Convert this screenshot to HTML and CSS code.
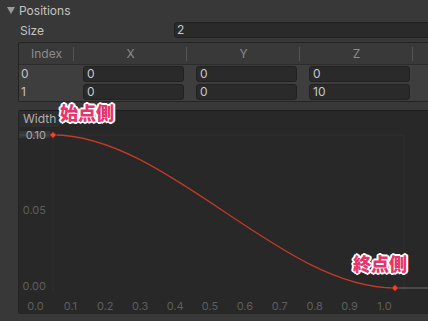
FILE: index.html
```html
<!DOCTYPE html>
<html lang="ja">
<head>
    <meta charset="UTF-8">
    <title>Positions</title>
    <link rel="stylesheet" href="styles.css">
</head>
<body>
    <div class="inspector">
        <div class="foldout"><span class="arrow"></span>Positions</div>

        <div class="field">
            <span class="label">Size</span>
            <span class="input">2</span>
        </div>

        <div class="table">
            <div class="thead">
                <div class="th">Index</div>
                <div class="th">X</div>
                <div class="th">Y</div>
                <div class="th">Z</div>
                <div class="th"></div>
            </div>
            <div class="tr">
                <div class="idx">0</div>
                <div class="cell"><span class="input">0</span></div>
                <div class="cell"><span class="input">0</span></div>
                <div class="cell"><span class="input">0</span></div>
                <div class="cell"></div>
            </div>
            <div class="tr">
                <div class="idx">1</div>
                <div class="cell"><span class="input">0</span></div>
                <div class="cell"><span class="input">0</span></div>
                <div class="cell"><span class="input">10</span></div>
                <div class="cell"></div>
            </div>
        </div>

        <div class="curve">
            <svg class="graph" width="410" height="202" viewBox="19 111 410 202">
                <!-- plot area -->
                <line x1="53" y1="135" x2="404" y2="135" class="grid" />
                <line x1="53" y1="135" x2="53" y2="292" class="grid" />
                <line x1="404" y1="135" x2="404" y2="292" class="grid" />

                <!-- wrap lines -->
                <rect x="19" y="131" width="31" height="7" fill="#373737" />
                <line x1="19" y1="135" x2="50" y2="135" stroke="#4a4a4a" stroke-width="1" />
                <line x1="398" y1="288" x2="430" y2="288" stroke="#555" stroke-width="1.6" />

                <path d="M53 135 C167 135 281 288 395 288" fill="none" stroke="#c23a26" stroke-width="1.3" />
                <path d="M53 131.5 L56.5 135 L53 138.5 L49.5 135 Z" fill="#e24a30" stroke="#5a140c" stroke-width="0.8" />
                <path d="M395 284.5 L398.5 288 L395 291.5 L391.5 288 Z" fill="#e24a30" stroke="#5a140c" stroke-width="0.8" />

                <text x="46" y="139" class="axis hi" text-anchor="end">0.10</text>
                <text x="46" y="214" class="axis" text-anchor="end">0.05</text>
                <text x="46" y="290" class="axis" text-anchor="end">0.00</text>

                <text x="35.5" y="310" class="axis" text-anchor="middle">0.0</text>
                <text x="70.4" y="310" class="axis" text-anchor="middle">0.1</text>
                <text x="105.3" y="310" class="axis" text-anchor="middle">0.2</text>
                <text x="140.2" y="310" class="axis" text-anchor="middle">0.3</text>
                <text x="175.1" y="310" class="axis" text-anchor="middle">0.4</text>
                <text x="210" y="310" class="axis" text-anchor="middle">0.5</text>
                <text x="244.9" y="310" class="axis" text-anchor="middle">0.6</text>
                <text x="279.8" y="310" class="axis" text-anchor="middle">0.7</text>
                <text x="314.7" y="310" class="axis" text-anchor="middle">0.8</text>
                <text x="349.6" y="310" class="axis" text-anchor="middle">0.9</text>
                <text x="384.5" y="310" class="axis" text-anchor="middle">1.0</text>
            </svg>
            <span class="curve-title">Width</span>
            <span class="note note-start">始点側</span>
            <span class="note note-end">終点側</span>
        </div>
    </div>
</body>
</html>
```

FILE: styles.css
```css
body {
    margin: 0;
    background: #383838;
    overflow: hidden;
    font-family: Inter, "Noto Sans", sans-serif;
    font-size: 12px;
    color: #c4c4c4;
}
.inspector {
    width: 440px;
}

.foldout {
    height: 20px;
    display: flex;
    align-items: center;
    padding-left: 7px;
}
.arrow {
    width: 0;
    height: 0;
    border-left: 4px solid transparent;
    border-right: 4px solid transparent;
    border-top: 7px solid #9a9a9a;
    margin-right: 4px;
}

.field {
    display: flex;
    align-items: center;
    height: 18px;
    margin-top: 1px;
    padding-left: 20px;
}
.field .label {
    width: 154px;
}
.input {
    display: block;
    box-sizing: border-box;
    height: 16px;
    line-height: 14px;
    background: #2a2a2a;
    border: 1px solid #212121;
    border-radius: 3px;
    padding-left: 3px;
    color: #c8c8c8;
}
.field .input {
    flex: 1;
    padding-left: 2px;
}

.table {
    margin: 3px 0 0 18px;
    border: 1px solid #242424;
    border-radius: 2px;
}
.thead,
.tr {
    display: grid;
    grid-template-columns: 55px 113px 113px 113px 1fr;
}
.thead {
    height: 21px;
    background: #393939;
    border-bottom: 1px solid #2c2c2c;
}
.th {
    position: relative;
    text-align: center;
    line-height: 21px;
    color: #8c8c8c;
}
.th::after {
    content: "";
    position: absolute;
    right: 0;
    top: 4px;
    width: 1px;
    height: 14px;
    background: #555;
}
.th:last-child::after {
    display: none;
}
.tr {
    height: 18px;
    background: #3e3e3e;
}
.idx {
    padding-left: 2px;
    line-height: 18px;
}
.cell {
    padding: 1px 3px 1px 9px;
}

.curve {
    position: relative;
    margin: 8px 0 0 18px;
    height: 202px;
    background: #282828;
    border-top: 1px solid #1c1c1c;
    border-left: 1px solid #232323;
    border-bottom: 1px solid #262626;
    border-radius: 3px 0 0 3px;
}
.graph {
    display: block;
    overflow: visible;
}
.grid {
    stroke: #2f2f2f;
    stroke-width: 1;
}
.axis {
    font-family: Inter, "Noto Sans", sans-serif;
    font-size: 11px;
    fill: #5e5e5e;
}
.axis.hi {
    fill: #a8a8a8;
}
.curve-title {
    position: absolute;
    left: 0;
    top: 0;
    padding: 0 4px;
    line-height: 16px;
    background: #2e2e2e;
    color: #b0b0b0;
}

.note {
    position: absolute;
    font-family: "Noto Sans CJK JP", sans-serif;
    font-weight: 900;
    font-size: 18px;
    line-height: 1;
    color: #e6356c;
    text-shadow:
        2px 0 0 #fff, -2px 0 0 #fff, 0 2px 0 #fff, 0 -2px 0 #fff,
        1.4px 1.4px 0 #fff, -1.4px 1.4px 0 #fff, 1.4px -1.4px 0 #fff, -1.4px -1.4px 0 #fff;
}
.note-start {
    left: 41px;
    top: -8px;
}
.note-end {
    left: 334px;
    top: 143px;
}
```
